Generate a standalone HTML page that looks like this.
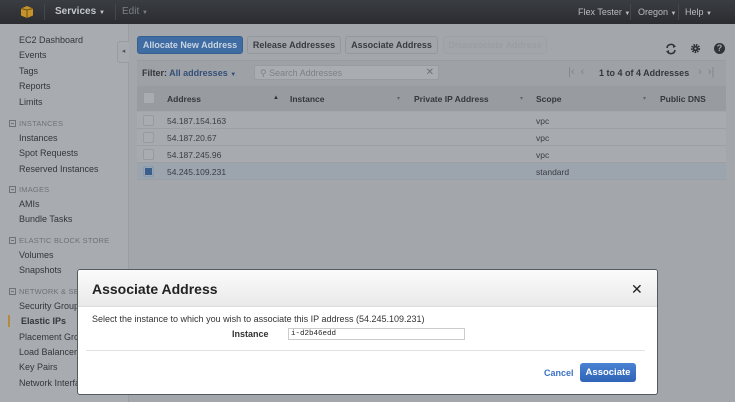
<!DOCTYPE html>
<html><head><meta charset="utf-8"><style>
*{box-sizing:border-box;margin:0;padding:0}
body{width:735px;height:402px;overflow:hidden;background:#a3a7ac;font-family:"Liberation Sans",sans-serif;font-size:9px;color:#2e3136;position:relative}
.abs{position:absolute}
#top{left:0;top:0;width:735px;height:24px;background:linear-gradient(#3a3d42,#2a2c30);color:#b9bcc0;font-size:9px}
#top span{position:absolute;top:7px}
#top small{font-size:6px}
#side{left:0;top:24px;width:129px;height:378px;background:#a8acb1;border-right:1px solid #9a9ea3}
.si{position:absolute;left:19px;font-size:9px;color:#33363b}
.sh{position:absolute;left:9px;font-size:7.5px;color:#6e7277;letter-spacing:.2px}
.sh i{display:inline-block;width:7px;height:7px;border:1px solid #6e7277;margin-right:3px;vertical-align:-1px;position:relative}
.sh i:after{content:"";position:absolute;left:1px;top:2px;width:3px;height:1px;background:#6e7277}
.btn{position:absolute;top:36px;height:18px;border-radius:3px;font-weight:bold;font-size:9px;text-align:center;line-height:17px;background:#a2a6ab;border:1px solid #94989d;color:#383b40}
.row{position:absolute;left:137px;width:589px;height:17px;border-bottom:1px solid #9ba0a5;background:#a7abb0}
.row span{position:absolute;top:4px;font-size:8.5px;color:#3a3d42}
.cb{position:absolute;left:6px;top:3px;width:11px;height:11px;border:1px solid #979ba0;border-radius:2px;background:#a9adb2}
.th{position:absolute;top:94px;font-weight:bold;font-size:8.5px;color:#34373c}
</style></head><body>
<div id="top" class="abs">
<svg class="abs" style="left:20px;top:5px" width="14" height="14" viewBox="0 0 14 14"><path d="M7 1L13 3.5V10.5L7 13L1 10.5V3.5Z" fill="#c6932b"/><path d="M7 5V13M1 3.5L7 5L13 3.5" stroke="#6e5216" stroke-width="1" fill="none"/></svg>
<div class="abs" style="left:44px;top:4px;width:1px;height:16px;background:#44474c"></div>
<span style="left:55px;font-weight:bold;font-size:10px;color:#c4c7cb;top:6px">Services <small>▼</small></span>
<div class="abs" style="left:115px;top:4px;width:1px;height:16px;background:#44474c"></div>
<span style="left:122px;font-size:10px;color:#7c8085;top:6px">Edit <small>▼</small></span>
<span style="left:578px">Flex Tester <small>▼</small></span>
<div class="abs" style="left:630px;top:4px;width:1px;height:16px;background:#44474c"></div>
<span style="left:638px">Oregon <small>▼</small></span>
<div class="abs" style="left:678px;top:4px;width:1px;height:16px;background:#44474c"></div>
<span style="left:685px">Help <small>▼</small></span>
</div>
<div id="side" class="abs">
<div class="si" style="top:11px">EC2 Dashboard</div>
<div class="si" style="top:26px">Events</div>
<div class="si" style="top:42px">Tags</div>
<div class="si" style="top:57px">Reports</div>
<div class="si" style="top:73px">Limits</div>
<div class="sh" style="top:95px"><i></i>INSTANCES</div>
<div class="si" style="top:109px">Instances</div>
<div class="si" style="top:124px">Spot Requests</div>
<div class="si" style="top:140px">Reserved Instances</div>
<div class="sh" style="top:161px"><i></i>IMAGES</div>
<div class="si" style="top:175px">AMIs</div>
<div class="si" style="top:190px">Bundle Tasks</div>
<div class="sh" style="top:212px"><i></i>ELASTIC BLOCK STORE</div>
<div class="si" style="top:226px">Volumes</div>
<div class="si" style="top:241px">Snapshots</div>
<div class="sh" style="top:263px"><i></i>NETWORK &amp; SECURITY</div>
<div class="si" style="top:277px">Security Groups</div>
<div class="abs" style="left:8px;top:291px;width:2px;height:12px;background:#b58a3a"></div>
<div class="si" style="top:292px;left:21px;font-weight:bold">Elastic IPs</div>
<div class="si" style="top:308px">Placement Groups</div>
<div class="si" style="top:323px">Load Balancers</div>
<div class="si" style="top:338px">Key Pairs</div>
<div class="si" style="top:354px">Network Interfaces</div>
</div>
<div class="abs" style="left:117px;top:41px;width:12px;height:22px;background:#a7abb0;border:1px solid #999da2;border-right:none;border-radius:3px 0 0 3px;font-size:7px;color:#555;line-height:20px;text-align:center">◂</div>
<div class="btn" style="left:137px;width:106px;background:#3f6da3;border-color:#375f8f;color:#c9d4e1">Allocate New Address</div>
<div class="btn" style="left:247px;width:94px">Release Addresses</div>
<div class="btn" style="left:345px;width:93px">Associate Address</div>
<div class="btn" style="left:443px;width:104px;color:#9a9ea3;border-color:#9da1a6">Disassociate Address</div>
<svg class="abs" style="left:665px;top:43px" width="12" height="12" viewBox="0 0 12 12"><path d="M2 5A4 4 0 0 1 9.5 3.5M10 7A4 4 0 0 1 2.5 8.5" stroke="#303338" stroke-width="1.6" fill="none"/><path d="M8 1L11 3.5L8 5Z M4 11L1 8.5L4 7Z" fill="#303338"/></svg>
<svg class="abs" style="left:690px;top:43px" width="11" height="11" viewBox="0 0 12 12"><circle cx="6" cy="6" r="3.8" fill="none" stroke="#303338" stroke-width="2.4" stroke-dasharray="1.6 1"/><circle cx="6" cy="6" r="3" fill="#303338"/><circle cx="6" cy="6" r="1.1" fill="#a3a7ac"/></svg>
<div class="abs" style="left:714px;top:43px;width:11px;height:11px;border-radius:50%;background:#303338;color:#a3a7ac;font-weight:bold;font-size:9px;text-align:center;line-height:11px">?</div>
<div class="abs" style="left:137px;top:60px;width:589px;height:26px;background:#9ea2a7;border-top:1px solid #989ca1"></div>
<div class="abs" style="left:142px;top:68px;font-weight:bold;font-size:9px;color:#34373c">Filter: <span style="color:#344f78">All addresses <span style="font-size:6px">▼</span></span></div>
<div class="abs" style="left:254px;top:65px;width:185px;height:15px;background:#a9adb2;border:1px solid #989ca1;border-radius:2px"><span style="position:absolute;left:5px;top:2px;font-size:9px;color:#7d8186">⚲ Search Addresses</span><span style="position:absolute;right:4px;top:1px;font-size:10px;color:#6c7075">✕</span></div>
<div class="abs" style="left:568px;top:66px;font-size:11px;color:#80848a">|‹ &nbsp;‹</div>
<div class="abs" style="left:599px;top:68px;font-weight:bold;font-size:9px;color:#34373c">1 to 4 of 4 Addresses</div>
<div class="abs" style="left:698px;top:66px;font-size:11px;color:#80848a">› &nbsp;›|</div>
<div class="abs" style="left:137px;top:86px;width:589px;height:25px;background:#989ca1"></div>
<div class="abs cb" style="left:143px;top:92px;width:12px;height:12px"></div>
<div class="th" style="left:167px">Address</div><div class="abs" style="left:273px;top:95px;font-size:6px">▲</div>
<div class="th" style="left:290px">Instance</div><div class="abs" style="left:397px;top:95px;font-size:6px;color:#666">▾</div>
<div class="th" style="left:414px">Private IP Address</div><div class="abs" style="left:520px;top:95px;font-size:6px;color:#666">▾</div>
<div class="th" style="left:536px">Scope</div><div class="abs" style="left:643px;top:95px;font-size:6px;color:#666">▾</div>
<div class="th" style="left:660px">Public DNS</div>
<div class="row" style="top:112px"><div class="cb"></div><span style="left:30px">54.187.154.163</span><span style="left:399px">vpc</span></div>
<div class="row" style="top:129px"><div class="cb"></div><span style="left:30px">54.187.20.67</span><span style="left:399px">vpc</span></div>
<div class="row" style="top:146px"><div class="cb"></div><span style="left:30px">54.187.245.96</span><span style="left:399px">vpc</span></div>
<div class="row" style="top:163px;background:#9ca4ad"><div class="cb" style="background:#3a5f8e;border-color:#879bb3;box-shadow:inset 0 0 0 1px #9ca4ad"></div><span style="left:30px">54.245.109.231</span><span style="left:399px">standard</span></div>
<div class="abs" style="left:77px;top:269px;width:581px;height:126px;background:#fff;border:1px solid #555a60;border-radius:3px;overflow:hidden">
<div style="position:absolute;left:0;top:0;width:100%;height:37px;background:linear-gradient(#fbfbfb,#e9e9e9);border-bottom:1px solid #dcdcdc"></div>
<div style="position:absolute;left:14px;top:11px;font-size:14px;font-weight:bold;color:#222">Associate Address</div>
<div style="position:absolute;left:553px;top:11px;font-size:14px;color:#222">✕</div>
<div style="position:absolute;left:14px;top:44px;font-size:9px;color:#333">Select the instance to which you wish to associate this IP address (54.245.109.231)</div>
<div style="position:absolute;left:154px;top:59px;font-size:9px;font-weight:bold;color:#333">Instance</div>
<div style="position:absolute;left:210px;top:58px;width:177px;height:12px;border:1px solid #ccc;font-family:'Liberation Mono',monospace;font-size:7.5px;color:#222;padding:1px 2px">i-d2b46edd</div>
<div style="position:absolute;left:8px;top:80px;width:559px;height:1px;background:#e2e2e2"></div>
<div style="position:absolute;left:466px;top:98px;font-size:9px;font-weight:bold;color:#3b72c4">Cancel</div>
<div style="position:absolute;left:502px;top:93px;width:56px;height:19px;border-radius:3px;background:linear-gradient(#4a82d3,#2f64b6);color:#fff;font-weight:bold;font-size:9.5px;text-align:center;line-height:19px">Associate</div>
</div>
</body></html>
